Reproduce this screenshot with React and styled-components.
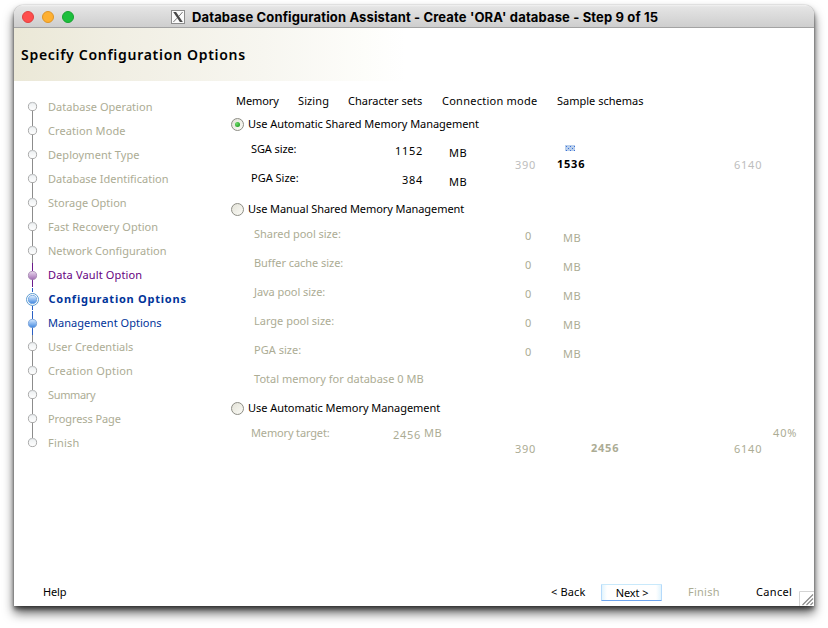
import React from 'react';
import styled, { createGlobalStyle } from 'styled-components';

const MUTED = '#acac94';
const SILVER = '#bdbdbd';

const GlobalStyle = createGlobalStyle`
  * { box-sizing: border-box; }
  body { margin: 0; background: #fff; overflow: hidden; }
`;

const Desktop = styled.div`
  width: 828px;
  height: 628px;
  padding: 5px 14px 22px;
  background: #fff;
  overflow: hidden;
  font: 400 11px/16px "Noto Sans", "Open Sans", sans-serif;
  color: #000;
`;

const Window = styled.div`
  display: flex;
  flex-direction: column;
  height: 601px;
  border-radius: 9px 9px 0 0;
  background: #fff;
  box-shadow: 0 0 1px rgba(0, 0, 0, 0.5), 0 3px 4px rgba(0, 0, 0, 0.5), 0 7px 11px rgba(0, 0, 0, 0.62);
`;

const TitleBar = styled.div`
  display: flex;
  align-items: center;
  height: 23px;
  flex: none;
  padding: 1px 0 0 8px;
  border-radius: 9px 9px 0 0;
  border-bottom: 1px solid #a3a3a3;
  background: linear-gradient(#f2f2f2 0, #e4e4e4 2px, #cecece 100%);
`;

const Lights = styled.div`
  display: flex;
  gap: 8px;
  width: 149px;
`;

const Light = styled.span`
  width: 12px;
  height: 12px;
  border-radius: 50%;
  border: 1px solid ${(p) => p.$edge};
  background: ${(p) => p.$fill};
`;

const TitleText = styled.span`
  margin-left: 7px;
  font: 700 13px/16px Inter, sans-serif;
  letter-spacing: 0.14px;
  white-space: nowrap;
`;

const Header = styled.div`
  display: flex;
  align-items: center;
  height: 53px;
  flex: none;
  padding-left: 7px;
  background: linear-gradient(90deg, #ebe8d7 0, #f1efe4 110px, #f7f6f0 250px, #fdfdfa 350px, #fff 392px);
`;

const PageTitle = styled.h1`
  margin: 0;
  font: 600 14px/20px "Noto Sans", sans-serif;
  letter-spacing: 0.71px;
`;

const Main = styled.div`
  display: flex;
  flex: 1;
`;

const Steps = styled.ol`
  width: 217px;
  margin: 0;
  padding: 14px 0 0 11px;
  list-style: none;
`;

const Step = styled.li`
  display: flex;
  align-items: center;
  height: 24px;
  color: ${(p) => p.$color || MUTED};
  font-weight: ${(p) => (p.$bold ? 700 : 400)};
  letter-spacing: ${(p) => p.$track || 0}px;
  white-space: nowrap;
`;

const StepMark = styled.svg`
  width: 15px;
  height: 24px;
  margin-right: ${(p) => (p.$wide ? 8.5 : 8)}px;
  flex: none;
`;

const Content = styled.div`
  flex: 1;
  padding-top: 12px;
`;

const Tabs = styled.nav`
  display: flex;
  gap: 19px;
  padding-left: 5px;
`;

const Tab = styled.span`
  width: ${(p) => p.$width}px;
  letter-spacing: ${(p) => p.$track}px;
  white-space: nowrap;
`;

const Option = styled.div`
  display: flex;
  align-items: center;
  gap: 4px;
  height: 16px;
  margin-top: ${(p) => p.$gap}px;
  letter-spacing: ${(p) => p.$track}px;
`;

const RadioDot = styled.span`
  width: 13px;
  height: 13px;
  padding: 3px;
  margin-top: 1px;
  border-radius: 50%;
  border: 1px solid #8d8d85;
  background: linear-gradient(135deg, #e3e2d8, #fbfbf6);

  &::after {
    content: "";
    display: ${(p) => (p.$on ? 'block' : 'none')};
    width: 5px;
    height: 5px;
    border-radius: 50%;
    background: radial-gradient(circle at 35% 35%, #6fdc6a, #1f9c22 80%);
  }
`;

const Panel = styled.div`
  display: flex;
  align-items: flex-start;
  margin-top: 9px;
  height: ${(p) => p.$height}px;
`;

const Fields = styled.div`
  display: grid;
  grid-template-columns: ${(p) => p.$columns};
  grid-auto-rows: 20px;
  row-gap: 9px;
  padding-left: ${(p) => p.$indent}px;
  color: ${(p) => (p.$disabled ? MUTED : '#000')};
  white-space: nowrap;
`;

const Cell = styled.span`
  padding-top: ${(p) => p.$drop || 0}px;
  letter-spacing: ${(p) => p.$track || 0}px;
`;

const Amount = styled(Cell)`
  letter-spacing: 0.71px;
  text-align: right;
`;

const Unit = styled(Cell)`
  letter-spacing: 0.5px;
`;

const Scale = styled.div`
  display: grid;
  grid-template-columns: ${(p) => p.$columns};
  align-items: end;
  padding-top: ${(p) => p.$top}px;
  color: ${(p) => p.$color};
  letter-spacing: 0.75px;
`;

const ScaleValue = styled.div`
  margin-bottom: 1px;
  font-weight: 700;
  color: ${(p) => p.$color};
`;

const Thumb = styled.svg`
  display: block;
  width: 10px;
  height: 6px;
  margin: 0 0 5px 8px;
`;

const Percent = styled.span`
  margin-left: 11px;
  letter-spacing: 0.86px;
  color: ${MUTED};
`;

const Footer = styled.div`
  display: flex;
  align-items: flex-start;
  height: 23px;
  flex: none;
  padding-left: 29px;
`;

const NavButton = styled.button`
  height: 18px;
  width: ${(p) => p.$width}px;
  margin-right: ${(p) => p.$gap || 0}px;
  padding: 0;
  border: 0;
  background: none;
  font: inherit;
  line-height: 18px;
  text-align: left;
  letter-spacing: ${(p) => p.$track || 0}px;
  color: ${(p) => (p.disabled ? MUTED : '#000')};
  white-space: nowrap;
`;

const DefaultButton = styled(NavButton)`
  height: 17px;
  margin-top: 1px;
  padding-left: 1px;
  line-height: 14px;
  text-align: center;
  border: 1px solid #b5dafb;
  border-top-color: #c9e9fb;
  border-bottom-color: #6fa5ee;
  border-radius: 1px;
  background: linear-gradient(90deg, #e2f4fd, #fff 5px, #fff calc(100% - 5px), #e2f4fd);
`;

const Grip = styled.svg`
  width: 15px;
  height: 15px;
  margin: 8px 0 0 auto;
`;

const steps = [
  { name: 'Database Operation', track: 0.03 },
  { name: 'Creation Mode', track: 0.09 },
  { name: 'Deployment Type', track: 0.07 },
  { name: 'Database Identification', track: 0.01 },
  { name: 'Storage Option' },
  { name: 'Fast Recovery Option', track: 0.05 },
  { name: 'Network Configuration' },
  { name: 'Data Vault Option', track: 0.14, kind: 'visited' },
  { name: 'Configuration Options', track: 0.76, kind: 'current' },
  { name: 'Management Options', track: 0.03, kind: 'next' },
  { name: 'User Credentials' },
  { name: 'Creation Option', track: 0.17 },
  { name: 'Summary', track: -0.35 },
  { name: 'Progress Page', track: -0.1 },
  { name: 'Finish', track: 0.2 },
];

const kinds = {
  idle: { text: MUTED, line: '#8c8c8c', edge: '#a0a0a0', from: '#eceff1', to: '#ffffff' },
  visited: { text: '#660080', line: '#6c1a8c', edge: '#a88bb4', from: '#ead9ee', to: '#a06cb2' },
  current: { text: '#003399', line: '#2a5fc4', edge: '#6fa5e0', from: '#e6f3ff', to: '#3f86e0' },
  next: { text: '#003399', line: '#2a5fc4', edge: '#7aa3d8', from: '#d8ebff', to: '#3f86e0' },
};

function Mark({ kind, first, last }) {
  const k = kinds[kind];
  const id = `ball-${kind}`;
  const current = kind === 'current';
  const idle = kind === 'idle';
  return (
    <StepMark viewBox="0 0 15 24" $wide={current}>
      <defs>
        <linearGradient id={id} x1="0" y1="0" x2="0" y2="1">
          <stop offset="0" stopColor={k.from} />
          <stop offset="1" stopColor={k.to} />
        </linearGradient>
      </defs>
      {!first && <path d={current ? 'M7.5 1v4' : 'M7.5 0v8'} stroke={k.line} />}
      {!last && <path d={current ? 'M7.5 19v4' : 'M7.5 15v9'} stroke={k.line} />}
      {current && <circle cx="7.5" cy="12.5" r="6" fill="#fff" stroke="#5c9bd0" />}
      <circle cx="7.5" cy={idle ? 11.5 : 12.5} r="4.1" fill={`url(#${id})`} stroke={k.edge} strokeWidth="0.9" />
      {idle && <path d="M4 9.6a4.1 4.1 0 0 1 7 0" fill="none" stroke="#d3d6d8" />}
    </StepMark>
  );
}

const poolRows = [
  ['Shared pool size:', -0.03],
  ['Buffer cache size:', -0.05],
  ['Java pool size:', -0.05],
  ['Large pool size:', -0.01],
  ['PGA size:', 0.03],
];

export default function App() {
  return (
    <Desktop>
      <GlobalStyle />
      <Window>
        <TitleBar>
          <Lights>
            <Light $fill="#fe4e4d" $edge="#e0403f" />
            <Light $fill="#feb032" $edge="#df9526" />
            <Light $fill="#1dbf3d" $edge="#17a330" />
          </Lights>
          <svg width="14" height="14" viewBox="0 0 14 14">
            <rect x="0.5" y="0.5" width="13" height="13" fill="#fbfbfb" stroke="#8c8c8c" />
            <path d="M2.2 2h2.9L11.8 12H8.9z" fill="#484848" />
            <path d="M11.6 2 7.9 6.3M6 8.2 2.4 12" stroke="#555" strokeWidth="0.8" />
          </svg>
          <TitleText>Database Configuration Assistant - Create 'ORA' database - Step 9 of 15</TitleText>
        </TitleBar>

        <Header>
          <PageTitle>Specify Configuration Options</PageTitle>
        </Header>

        <Main>
          <Steps>
            {steps.map(({ name, track, kind = 'idle' }, i) => (
              <Step key={name} $color={kinds[kind].text} $bold={kind === 'current'} $track={track}>
                <Mark kind={kind} first={i === 0} last={i === steps.length - 1} />
                {name}
              </Step>
            ))}
          </Steps>

          <Content>
            <Tabs>
              <Tab $width={43} $track={-0.1}>Memory</Tab>
              <Tab $width={31} $track={0.1}>Sizing</Tab>
              <Tab $width={75} $track={0.02}>Character sets</Tab>
              <Tab $width={96} $track={0.25}>Connection mode</Tab>
              <Tab $width={87} $track={0}>Sample schemas</Tab>
            </Tabs>

            <Option $gap={7} $track={-0.05}>
              <RadioDot $on />
              Use Automatic Shared Memory Management
            </Option>
            <Panel $height={49}>
              <Fields $indent={20} $columns="120px 52px 26px 66px">
                <Cell $track={-0.1}>SGA size:</Cell>
                <Amount $drop={2}>1152</Amount>
                <span />
                <Unit $drop={4}>MB</Unit>
                <Cell>PGA Size:</Cell>
                <Amount $drop={2}>384</Amount>
                <span />
                <Unit $drop={4}>MB</Unit>
              </Fields>
              <Scale $columns="42px 177px 28px" $top={4} $color={SILVER}>
                <span>390</span>
                <ScaleValue $color="#000">
                  <Thumb viewBox="0 0 10 6">
                    <rect width="10" height="6" fill="#b9cfec" />
                    <path
                      d="M1 1h1v1h-1zM5 1h1v1h-1zM9 1h1v1h-1zM3 3h1v1h-1zM7 3h1v1h-1zM1 5h1v1h-1zM5 5h1v1h-1zM9 5h1v1h-1z"
                      fill="#3c70d6"
                    />
                  </Thumb>
                  1536
                </ScaleValue>
                <span>6140</span>
              </Scale>
            </Panel>

            <Option $gap={11} $track={-0.07}>
              <RadioDot />
              Use Manual Shared Memory Management
            </Option>
            <Panel $height={165}>
              <Fields $disabled $indent={23} $columns="250px 28px 31px 20px">
                {poolRows.map(([label, track]) => (
                  <React.Fragment key={label}>
                    <Cell $track={track}>{label}</Cell>
                    <Amount $drop={2}>0</Amount>
                    <span />
                    <Unit $drop={4}>MB</Unit>
                  </React.Fragment>
                ))}
                <Cell $track={0.03}>Total memory for database 0 MB</Cell>
              </Fields>
            </Panel>

            <Option $gap={9} $track={-0.05}>
              <RadioDot />
              Use Automatic Memory Management
            </Option>
            <Panel $height={32}>
              <Fields $disabled $indent={20} $columns="120px 50px 3px 91px">
                <Cell $track={-0.15}>Memory target:</Cell>
                <Amount $drop={2}>2456</Amount>
                <span />
                <Unit>MB</Unit>
              </Fields>
              <Scale $columns="76px 143px 28px" $top={15} $color={MUTED}>
                <span>390</span>
                <ScaleValue>2456</ScaleValue>
                <span>6140</span>
              </Scale>
              <Percent>40%</Percent>
            </Panel>
          </Content>
        </Main>

        <Footer>
          <NavButton $width={24} $gap={484} $track={-0.15}>Help</NavButton>
          <NavButton $width={36} $gap={14} $track={0.15}>{'< Back'}</NavButton>
          <DefaultButton $width={61} $gap={26} $track={-0.1}>{'Next >'}</DefaultButton>
          <NavButton $width={32} $gap={36} $track={0.25} disabled>Finish</NavButton>
          <NavButton $width={37} $track={0.32}>Cancel</NavButton>
          <Grip viewBox="0 0 15 15">
            <path d="M0.5 15V0.5H15" fill="none" stroke="#d4d4d4" />
            <path d="M3.5 14 14 3.5M7.5 14 14 7.5M11.5 14 14 11.5" stroke="#8a8a8a" strokeWidth="1.1" />
          </Grip>
        </Footer>
      </Window>
    </Desktop>
  );
}
